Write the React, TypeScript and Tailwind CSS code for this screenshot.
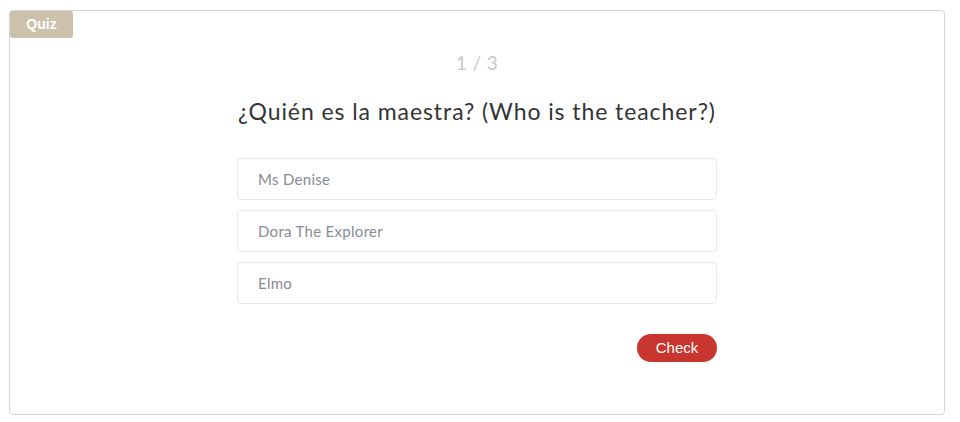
import React from 'react';

const options = ['Ms Denise', 'Dora The Explorer', 'Elmo'];

const App: React.FC = () => {
  return (
    <div className="pl-[9px] pr-[15px] pt-[10px] pb-[8px] bg-white">
      <div className="relative h-[405px] rounded border border-[#d4d4d4] bg-white">
        <div className="absolute left-0 top-0 flex h-[27px] w-[63px] items-center justify-center rounded-[3px] bg-[#cdc1ac] text-[14px] font-bold text-white [font-family:'Liberation_Sans',Arial,sans-serif]">
          Quiz
        </div>

        <div className="flex flex-col items-center [font-family:Lato,'Open_Sans',sans-serif]">
          <div className="mt-[39px] h-[26px] text-[19px] leading-[26px] text-[#c8c8c8] tracking-wide">
            1 / 3
          </div>
          <h2 className="mt-[20px] text-[23px] leading-[30px] tracking-[0.04em] text-[#333333]">
            ¿Quién es la maestra? (Who is the teacher?)
          </h2>

          <div className="mt-[32px] flex w-[480px] flex-col gap-[10px]">
            {options.map((opt) => (
              <div
                key={opt}
                className="flex h-[42px] items-center rounded border border-[#e9e9e9] px-[20px] text-[15px] tracking-[0.02em] text-[#878b96]"
              >
                {opt}
              </div>
            ))}
          </div>

          <div className="mt-[30px] flex w-[480px] justify-end">
            <button
              type="button"
              className="h-[28px] w-[80px] rounded-full bg-[#c9362f] text-[15px] text-white [font-family:'Liberation_Sans',Arial,sans-serif]"
            >
              Check
            </button>
          </div>
        </div>
      </div>
    </div>
  );
};

export default App;
